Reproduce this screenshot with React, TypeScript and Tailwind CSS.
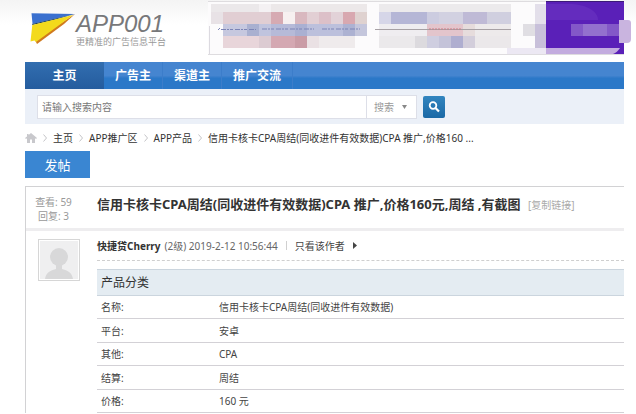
import React from 'react';

const navItems = ['主页', '广告主', '渠道主', '推广交流'];

const crumbs = ['主页', 'APP推广区', 'APP产品', '信用卡核卡CPA周结(同收进件有效数据)CPA 推广,价格160 ...'];

const details = [
  { label: '名称:', value: '信用卡核卡CPA周结(同收进件有效数据)' },
  { label: '平台:', value: '安卓' },
  { label: '其他:', value: 'CPA' },
  { label: '结算:', value: '周结' },
  { label: '价格:', value: '160 元' },
];

// [x, y, width, height, color]
const mosaic: [number, number, number, number, string][] = [
  [3, 4, 48, 8, '#ebe8ea'],
  [51, 4, 12, 8, '#f4f1f3'],
  [63, 4, 96, 8, '#ece8e9'],
  [171, 4, 132, 8, '#eceaec'],
  [3, 12, 12, 12, '#e8e2e6'],
  [15, 12, 48, 12, '#e1ced3'],
  [63, 12, 12, 12, '#d6aab2'],
  [75, 12, 12, 12, '#f7f0f0'],
  [87, 12, 12, 12, '#d9b8bf'],
  [99, 12, 12, 12, '#e2cfd4'],
  [111, 12, 12, 12, '#dcc0c8'],
  [123, 12, 12, 12, '#e2d2d8'],
  [135, 12, 12, 12, '#d8a8b0'],
  [147, 12, 12, 12, '#dfd2d0'],
  [171, 12, 12, 12, '#d6d6e8'],
  [183, 12, 36, 12, '#b5b6d6'],
  [219, 12, 12, 12, '#cccce0'],
  [231, 12, 24, 12, '#d2d1e1'],
  [255, 12, 24, 12, '#bfbad6'],
  [279, 12, 24, 12, '#d0cfdf'],
  [15, 24, 24, 12, '#c6c8df'],
  [39, 24, 12, 12, '#a9b0d0'],
  [51, 24, 12, 12, '#c0c4de'],
  [63, 24, 24, 12, '#b6bad8'],
  [87, 24, 12, 12, '#aab0d2'],
  [99, 24, 36, 12, '#bcc0dc'],
  [135, 24, 12, 12, '#adb2d2'],
  [147, 24, 12, 12, '#c4c6dc'],
  [171, 24, 48, 12, '#efedf0'],
  [219, 24, 36, 12, '#e3c5cc'],
  [255, 24, 12, 12, '#e6dcdc'],
  [267, 24, 36, 12, '#edeaeb'],
  [315, 24, 12, 12, '#e0dee3'],
  [15, 36, 36, 12, '#e8d5da'],
  [51, 36, 12, 12, '#dccbd2'],
  [63, 36, 24, 12, '#d4a8b2'],
  [87, 36, 12, 12, '#ca9ca6'],
  [99, 36, 12, 12, '#eae1e4'],
  [111, 36, 36, 12, '#efebec'],
  [171, 36, 36, 12, '#ebe9eb'],
  [207, 36, 12, 12, '#dcdade'],
  [219, 36, 12, 12, '#cfcee0'],
  [231, 36, 12, 12, '#c4c3d9'],
  [243, 36, 12, 12, '#afaed0'],
  [255, 36, 12, 12, '#d3cedb'],
  [267, 36, 36, 12, '#ebe8ea'],
  [327, 4, 11, 20, '#e3dfea'],
  [327, 24, 11, 24, '#c8c0da'],
];

function Logo() {
  return (
    <svg className="w-[46px] h-8 shrink-0" viewBox="0 0 46 32" aria-hidden="true">
      <path d="M1.5 1.2L45 2L2.5 12Z" fill="#3a70cf" />
      <path d="M2 12L45 2L24 8L2.5 13Z" fill="#173a5c" />
      <path d="M45 2L34 12L7 32L5 28Z" fill="#d07a1e" />
      <path d="M2.3 13L43 3L6 30L4.5 28.5L0.5 29.5Z" fill="#f3da1c" />
    </svg>
  );
}

function Banner() {
  return (
    <svg className="h-[58px] flex-1 min-w-0" viewBox="0 0 428 58" preserveAspectRatio="xMinYMin slice" aria-hidden="true">
      <rect x="0" y="1" width="416" height="53" fill="#fcfbfc" />
      <path d="M0 1.5H416M0 54.5H416" stroke="#dedcdf" />
      <path d="M1.5 26V54" stroke="#dcdae0" />
      {mosaic.map(([x, y, w, h, fill]) => (
        <rect key={`${x}-${y}`} x={x} y={y} width={w} height={h} fill={fill} />
      ))}
      <path d="M10 30L12 28M13 29.5H48M54 29H106M114 29H152" stroke="#7c84b6" strokeDasharray="5 1 2 1 3 2" />
      <path d="M167 29.5H303" stroke="#a7a1a5" />
      <path d="M221 29H254" stroke="#cc7f89" strokeDasharray="2 1" />
      <rect x="338" y="2" width="78" height="52" fill="#5a20b8" />
      <path d="M338 4H360C380 4 390 12 390 20H338Z" fill="#642cbe" />
      <path d="M338 1.5H416" stroke="#3c1a78" />
      <rect x="363" y="24" width="48" height="12" fill="#8358c8" />
      <rect x="375" y="24" width="24" height="12" fill="#9370ce" />
      <path d="M299 48H338V54H299Z" fill="#ece8f3" />
      <path d="M338 48H412C410 51 408 53 405 54H338Z" fill="#c3acdf" />
      <path d="M411 20H420Q423 20 423 23V39Q423 43 419 43H411Z" fill="#c9b4df" />
    </svg>
  );
}

function Chevron() {
  return (
    <svg className="w-1 h-2 shrink-0" viewBox="0 0 4 8" fill="none" stroke="#c4c4c8" aria-hidden="true">
      <path d="M0.5 0.5L3.5 4L0.5 7.5" />
    </svg>
  );
}

export default function App() {
  return (
    <div
      lang="zh-CN"
      className="min-h-screen overflow-hidden bg-white pl-[25px] text-[10px] leading-[14px] text-[#444] font-['Noto_Sans','Noto_Sans_CJK_SC',sans-serif]"
    >
      <header className="flex h-[62px] -ml-[25px] pl-[30px] bg-linear-to-b from-[#f4f4f4] to-white to-40%">
        <div className="flex w-[178px] shrink-0 pt-3">
          <Logo />
          <div>
            <div className="text-[24px] leading-[24px] italic text-[#77787a] font-['Liberation_Sans',sans-serif]">APP001</div>
            <div className="text-[9px] leading-3 text-[#999]">更精准的广告信息平台</div>
          </div>
        </div>
        <Banner />
      </header>

      <div className="pr-3">
        <nav className="flex h-[27px] bg-linear-to-b from-[#4585d0] from-50% to-[#2b78c8] to-60% text-xs font-bold text-white">
          {navItems.map((item, i) => (
            <a
              key={item}
              href="#"
              className={
                i === 0
                  ? 'flex w-[79px] items-center justify-center bg-linear-to-b from-[#326eb0] to-[#245c9e]'
                  : 'flex items-center border-r border-[#3c7dca] px-[11px]'
              }
            >
              {item}
            </a>
          ))}
        </nav>

        <form className="flex h-[35px] items-center gap-1.5 bg-[#ebf0f8] pl-3" onSubmit={(e) => e.preventDefault()}>
          <div className="flex h-6 w-[380px] border border-[#dddfe8] bg-white">
            <input
              type="text"
              aria-label="搜索内容"
              placeholder="请输入搜索内容"
              className="min-w-0 flex-1 px-1 outline-none placeholder:text-[#777]"
            />
            <button type="button" className="flex w-[50px] items-center gap-2 border-l border-[#dddfe8] pl-[7px] text-[#999]">
              搜索
              <svg className="w-[5px] h-1" viewBox="0 0 5 4" fill="#888" aria-hidden="true">
                <path d="M0 0H5L2.5 4Z" />
              </svg>
            </button>
          </div>
          <button
            type="submit"
            aria-label="搜索"
            className="flex size-[22px] items-center justify-center rounded-xs bg-linear-to-b from-[#3285bf] to-[#1b69a6]"
          >
            <svg className="size-3" viewBox="0 0 12 12" fill="none" stroke="white" aria-hidden="true">
              <circle cx="5" cy="4.5" r="3.3" strokeWidth="1.8" />
              <path d="M7.5 7L11 10.5" strokeWidth="2.2" />
            </svg>
          </button>
        </form>

        <div className="flex h-[27px] items-center gap-1.5 text-[#333]">
          <svg className="w-3 h-[10px] shrink-0" viewBox="0 0 12 10" fill="#c8c8cc" aria-hidden="true">
            <path d="M6 0L12 5L11 6L10 5.2V10H7V6.5H5V10H2V5.2L1 6L0 5L2 3.4V1H3.6V2Z" />
          </svg>
          {crumbs.map((crumb) => (
            <React.Fragment key={crumb}>
              <Chevron />
              <a href="#" className="whitespace-nowrap">{crumb}</a>
            </React.Fragment>
          ))}
        </div>

        <button type="button" className="block h-[27px] w-[65px] bg-[#3a86d2] text-[13px] text-white">
          发帖
        </button>

        <main className="mt-2 border-t border-l border-[#d2d2d4]">
          <div className="flex h-11 border-b-3 border-[#eeedef]">
            <div className="w-[71px] shrink-0 pt-2 pl-[9px] text-[#999]">
              <div className="w-[37px] text-center whitespace-nowrap">查看: 59</div>
              <div className="w-[37px] text-center whitespace-nowrap">回复: 3</div>
            </div>
            <h1 className="pt-2 text-[13px] leading-[18px] font-bold whitespace-nowrap text-[#333]">
              信用卡核卡CPA周结(同收进件有效数据)CPA 推广,价格160元,周结 ,有截图{' '}
              <a href="#" className="ml-1 text-[10px] font-normal text-[#aaa]">[复制链接]</a>
            </h1>
          </div>

          <div className="flex">
            <div className="w-[71px] shrink-0 pt-2 pl-3">
              <svg className="size-[42px]" viewBox="0 0 42 42" aria-hidden="true">
                <rect x="0.5" y="0.5" width="41" height="41" fill="#fff" stroke="#d6d6d6" />
                <rect x="2" y="2" width="38" height="38" fill="#efeff0" />
                <circle cx="21" cy="18" r="9" fill="#d8d8d9" />
                <path d="M18 25H24V30C31 32 34 34 35 40H7C8 34 11 32 18 30Z" fill="#d8d8d9" />
              </svg>
            </div>

            <div className="min-w-0 flex-1">
              <div className="flex h-[30px] items-center border-b border-dashed border-[#cfcfcf] whitespace-nowrap">
                <a href="#" className="font-bold text-[#333]">快捷贷Cherry</a>
                <span className="ml-1 text-[#666]">(2级) 2019-2-12 10:56:44</span>
                <span className="mx-2 h-[9px] w-px bg-[#d0d0d0]" />
                <a href="#">只看该作者</a>
                <svg className="ml-2 w-1 h-[7px]" viewBox="0 0 4 7" fill="#444" aria-hidden="true">
                  <path d="M0 0L4 3.5L0 7Z" />
                </svg>
              </div>

              <table className="mt-2 w-full table-fixed border-collapse text-left">
                <colgroup>
                  <col className="w-[118px]" />
                  <col />
                </colgroup>
                <thead>
                  <tr className="h-[26px] border-y border-[#cbd5de] bg-[#e4ecf2]">
                    <th colSpan={2} className="px-1 text-xs font-normal text-[#333]">产品分类</th>
                  </tr>
                </thead>
                <tbody>
                  {details.map(({ label, value }) => (
                    <tr key={label} className="h-6 border-b border-[#d3d1d6] odd:h-[23px]">
                      <th scope="row" className="px-1 font-normal">{label}</th>
                      <td className="px-1">{value}</td>
                    </tr>
                  ))}
                </tbody>
              </table>
            </div>
          </div>
        </main>
      </div>
    </div>
  );
}
